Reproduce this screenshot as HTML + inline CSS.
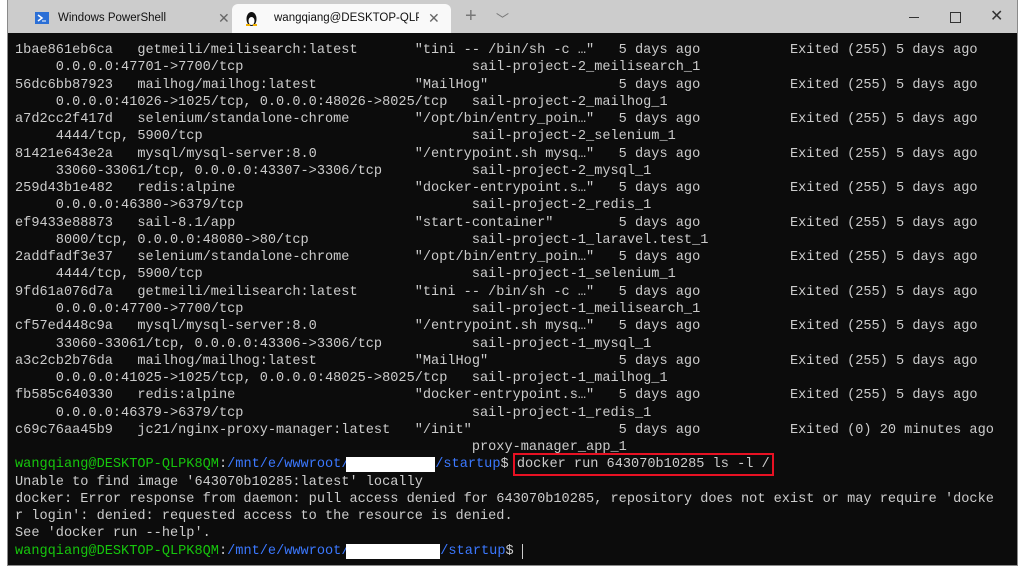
<!DOCTYPE html>
<html><head><meta charset="utf-8"><style>
body{margin:0;width:1024px;height:572px;background:#fff;position:relative;overflow:hidden;font-family:"Liberation Sans",sans-serif}
.win{position:absolute;left:7px;top:0;width:1009px;height:565px;border:1px solid #8a8a8a;border-top:none;background:#cccccc}
.tab{position:absolute;top:4px;height:29px;font-size:11.5px;color:#111;line-height:29px;white-space:nowrap}
.t1{left:10px;width:210px}
.t2{left:224px;width:219px;background:#f9f9f9;border-radius:6px 6px 0 0}
.x{position:absolute;color:#666;font-size:14px}
.term{position:absolute;left:0;top:33px;width:1009px;height:532px;background:#0c0c0c}
pre{margin:0;position:absolute;left:7px;top:9px;font-family:"Liberation Mono",monospace;font-size:13.6px;line-height:17.27px;color:#cccccc}
.g{color:#16c60c}.b{color:#3b78ff}.w{background:#fff;color:#fff;margin-left:-4px}
.rb{outline:2px solid #e81123;outline-offset:2px}
</style></head><body>
<div class="win">
 <div class="tab t1"><svg style="position:absolute;left:17px;top:8px" width="14" height="12"><rect width="14" height="12" fill="#2b6fd6"/><path d="M3 3l4 3-4 3" stroke="#fff" fill="none" stroke-width="1.5"/><path d="M7 9h4" stroke="#fff"/></svg><span style="position:absolute;left:40px">Windows PowerShell</span><span class="x" style="left:200px">✕</span></div>
 <div class="tab t2"><svg style="position:absolute;left:13px;top:7px" width="13" height="15"><ellipse cx="6.5" cy="8" rx="5" ry="7" fill="#111"/><ellipse cx="6.5" cy="10" rx="3" ry="4" fill="#fff"/><path d="M1 14h4M8 14h4" stroke="#f0b000" stroke-width="2"/></svg><span style="position:absolute;left:42px;width:145px;overflow:hidden">wangqiang@DESKTOP-QLPK8Q</span><span class="x" style="left:196px">✕</span></div>
 <span style="position:absolute;left:457px;top:5px;font-size:20px;color:#777">+</span>
 <span style="position:absolute;left:488px;top:9px;font-size:13px;color:#777">﹀</span>
 <div style="position:absolute;left:901px;top:17px;width:10px;height:1px;background:#333"></div>
 <div style="position:absolute;left:942px;top:12px;width:9px;height:9px;border:1px solid #333"></div>
 <span style="position:absolute;left:982px;top:6px;font-size:16px;color:#333">✕</span>
 <div class="term"><pre>1bae861eb6ca   getmeili/meilisearch:latest       "tini -- /bin/sh -c …"   5 days ago           Exited (255) 5 days ago
     0.0.0.0:47701->7700/tcp                            sail-project-2_meilisearch_1
56dc6bb87923   mailhog/mailhog:latest            "MailHog"                5 days ago           Exited (255) 5 days ago
     0.0.0.0:41026->1025/tcp, 0.0.0.0:48026->8025/tcp   sail-project-2_mailhog_1
a7d2cc2f417d   selenium/standalone-chrome        "/opt/bin/entry_poin…"   5 days ago           Exited (255) 5 days ago
     4444/tcp, 5900/tcp                                 sail-project-2_selenium_1
81421e643e2a   mysql/mysql-server:8.0            "/entrypoint.sh mysq…"   5 days ago           Exited (255) 5 days ago
     33060-33061/tcp, 0.0.0.0:43307->3306/tcp           sail-project-2_mysql_1
259d43b1e482   redis:alpine                      "docker-entrypoint.s…"   5 days ago           Exited (255) 5 days ago
     0.0.0.0:46380->6379/tcp                            sail-project-2_redis_1
ef9433e88873   sail-8.1/app                      "start-container"        5 days ago           Exited (255) 5 days ago
     8000/tcp, 0.0.0.0:48080->80/tcp                    sail-project-1_laravel.test_1
2addfadf3e37   selenium/standalone-chrome        "/opt/bin/entry_poin…"   5 days ago           Exited (255) 5 days ago
     4444/tcp, 5900/tcp                                 sail-project-1_selenium_1
9fd61a076d7a   getmeili/meilisearch:latest       "tini -- /bin/sh -c …"   5 days ago           Exited (255) 5 days ago
     0.0.0.0:47700->7700/tcp                            sail-project-1_meilisearch_1
cf57ed448c9a   mysql/mysql-server:8.0            "/entrypoint.sh mysq…"   5 days ago           Exited (255) 5 days ago
     33060-33061/tcp, 0.0.0.0:43306->3306/tcp           sail-project-1_mysql_1
a3c2cb2b76da   mailhog/mailhog:latest            "MailHog"                5 days ago           Exited (255) 5 days ago
     0.0.0.0:41025->1025/tcp, 0.0.0.0:48025->8025/tcp   sail-project-1_mailhog_1
fb585c640330   redis:alpine                      "docker-entrypoint.s…"   5 days ago           Exited (255) 5 days ago
     0.0.0.0:46379->6379/tcp                            sail-project-1_redis_1
c69c76aa45b9   jc21/nginx-proxy-manager:latest   "/init"                  5 days ago           Exited (0) 20 minutes ago
                                                        proxy-manager_app_1
<span class="g">wangqiang@DESKTOP-QLPK8QM</span>:<span class="b">/mnt/e/wwwroot/</span><span class="w">xxxxxxxxxxx</span><span class="b">/startup</span>$ <span class="rb">docker run 643070b10285 ls -l /</span>
Unable to find image '643070b10285:latest' locally
docker: Error response from daemon: pull access denied for 643070b10285, repository does not exist or may require 'docke
r login': denied: requested access to the resource is denied.
See 'docker run --help'.
<span class="g">wangqiang@DESKTOP-QLPK8QM</span>:<span class="b">/mnt/e/wwwroot/</span><span class="w" style="padding-right:5px">xxxxxxxxxxx</span><span class="b">/startup</span>$ <span style="border-left:1px solid #ccc"> </span></pre></div>
</div>
</body></html>
